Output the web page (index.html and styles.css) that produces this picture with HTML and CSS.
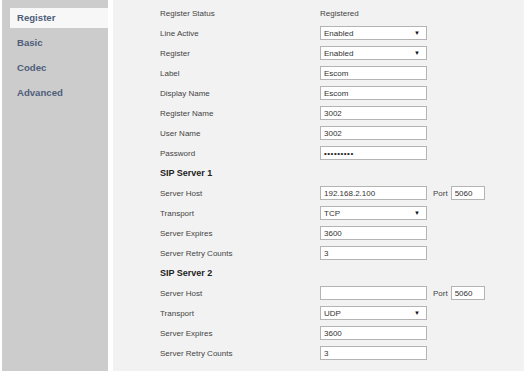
FILE: index.html
```html
<!DOCTYPE html>
<html lang="en">
<head>
    <meta charset="UTF-8">
    <title>Account Register</title>
    <link rel="stylesheet" href="styles.css">
</head>
<body>
    <div class="page">
        <ul class="menu">
            <li class="menu-item active">Register</li>
            <li class="menu-item">Basic</li>
            <li class="menu-item">Codec</li>
            <li class="menu-item">Advanced</li>
        </ul>

        <div class="content">
            <div class="row">
                <span class="label">Register Status</span>
                <span class="value">Registered</span>
            </div>
            <div class="row">
                <span class="label">Line Active</span>
                <div class="select"><span>Enabled</span><span class="arrow">&#9660;</span></div>
            </div>
            <div class="row">
                <span class="label">Register</span>
                <div class="select"><span>Enabled</span><span class="arrow">&#9660;</span></div>
            </div>
            <div class="row">
                <span class="label">Label</span>
                <input class="field" type="text" value="Escom">
            </div>
            <div class="row">
                <span class="label">Display Name</span>
                <input class="field" type="text" value="Escom">
            </div>
            <div class="row">
                <span class="label">Register Name</span>
                <input class="field" type="text" value="3002">
            </div>
            <div class="row">
                <span class="label">User Name</span>
                <input class="field" type="text" value="3002">
            </div>
            <div class="row">
                <span class="label">Password</span>
                <div class="field password">&bull;&bull;&bull;&bull;&bull;&bull;&bull;&bull;&bull;</div>
            </div>

            <div class="row">
                <span class="section">SIP Server 1</span>
            </div>
            <div class="row">
                <span class="label">Server Host</span>
                <input class="field" type="text" value="192.168.2.100">
                <span class="port-label">Port</span>
                <input class="field port" type="text" value="5060">
            </div>
            <div class="row">
                <span class="label">Transport</span>
                <div class="select"><span>TCP</span><span class="arrow">&#9660;</span></div>
            </div>
            <div class="row">
                <span class="label">Server Expires</span>
                <input class="field" type="text" value="3600">
            </div>
            <div class="row">
                <span class="label">Server Retry Counts</span>
                <input class="field" type="text" value="3">
            </div>

            <div class="row">
                <span class="section">SIP Server 2</span>
            </div>
            <div class="row">
                <span class="label">Server Host</span>
                <input class="field" type="text" value="">
                <span class="port-label">Port</span>
                <input class="field port" type="text" value="5060">
            </div>
            <div class="row">
                <span class="label">Transport</span>
                <div class="select"><span>UDP</span><span class="arrow">&#9660;</span></div>
            </div>
            <div class="row">
                <span class="label">Server Expires</span>
                <input class="field" type="text" value="3600">
            </div>
            <div class="row">
                <span class="label">Server Retry Counts</span>
                <input class="field" type="text" value="3">
            </div>
        </div>
    </div>
</body>
</html>
```

FILE: styles.css
```css
body {
    margin: 0;
    background: #ffffff;
    font-family: "Liberation Sans", Arial, sans-serif;
    font-size: 8px;
    color: #444;
}
.page {
    display: flex;
    height: 371px;
    padding-left: 2px;
    gap: 5px;
    overflow: hidden;
}
.menu {
    list-style: none;
    margin: 0;
    padding: 8px 0 0 8px;
    width: 98px;
    background: #cccccc;
}
.menu-item {
    height: 20px;
    line-height: 20px;
    margin-bottom: 5px;
    padding-left: 7px;
    font-size: 9.6px;
    font-weight: bold;
    color: #4e5d7a;
}
.menu-item.active {
    background: #f7f7f7;
}
.content {
    flex: 1;
    background: #f2f2f2;
    padding: 3px 0 0 47px;
}
.row {
    display: flex;
    align-items: center;
    height: 20px;
}
.label {
    width: 160px;
    flex-shrink: 0;
}
.value {
    color: #444;
}
.section {
    font-weight: bold;
    color: #222;
    font-size: 9px;
}
.field, .select {
    box-sizing: border-box;
    width: 107px;
    height: 14px;
    margin: 0;
    padding: 0 3px;
    border: 1px solid #b4b4b4;
    background: #ffffff;
    font-family: "Liberation Sans", Arial, sans-serif;
    font-size: 8px;
    color: #333;
    outline: none;
}
.select {
    display: flex;
    align-items: center;
    justify-content: space-between;
    padding-right: 6px;
}
.arrow {
    font-size: 6px;
    color: #111;
}
.password {
    display: flex;
    align-items: center;
    font-size: 8px;
    letter-spacing: 0.5px;
    color: #222;
}
.port-label {
    margin: 0 3px 0 6px;
}
.field.port {
    width: 34px;
}
```
